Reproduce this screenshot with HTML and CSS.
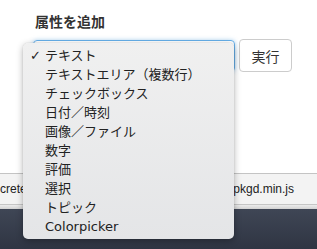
FILE: index.html
```html
<!DOCTYPE html>
<html lang="ja">
<head>
  <meta charset="UTF-8" />
  <title>属性を追加</title>
  <link rel="stylesheet" href="styles.css">
</head>
<body>

<div class="page">
  <div class="form">
    <label class="title">属性を追加</label>
    <div class="row">
      <div class="select"></div>
      <button class="btn">実行</button>
    </div>
  </div>

  <div class="files">
    <span>crete</span>
    <span>masonry.pkgd.min.js</span>
  </div>
  <div class="band"></div>
  <div class="desk"></div>

  <ul class="menu">
    <li class="checked">テキスト</li>
    <li>テキストエリア（複数行）</li>
    <li>チェックボックス</li>
    <li>日付／時刻</li>
    <li>画像／ファイル</li>
    <li>数字</li>
    <li>評価</li>
    <li>選択</li>
    <li>トピック</li>
    <li>Colorpicker</li>
  </ul>
</div>

</body>
</html>
```

FILE: styles.css
```css
body {
  margin: 0;
  font-family: "DejaVu Sans", "Noto Sans CJK JP", sans-serif;
  background: #fff;
  overflow: hidden;
}

.page {
  position: relative;
  height: 249px;
}

.form {
  height: 173px;
  padding: 12px 0 0 33px;
  box-sizing: border-box;
}

.title {
  display: block;
  font-size: 14px;
  font-weight: bold;
  line-height: 20px;
  color: #333;
  margin-bottom: 7px;
  padding-left: 2px;
}

.row {
  display: flex;
  gap: 4px;
}

.select {
  width: 202px;
  height: 32px;
  margin-top: 1px;
  box-sizing: border-box;
  border: 1px solid #66afe9;
  border-radius: 4px;
  box-shadow: 0 0 4px rgba(102, 175, 233, 0.5);
}

.btn {
  width: 53px;
  height: 33px;
  background: #fff;
  border: 1px solid #ccc;
  border-radius: 4px;
  font-family: "Noto Sans CJK JP", sans-serif;
  font-size: 14px;
  color: #333;
  padding: 0;
}

.files {
  display: flex;
  justify-content: space-between;
  align-items: center;
  height: 30px;
  padding-right: 23px;
  background: #f3f3f3;
  border-top: 1px solid #c4c4c4;
  border-bottom: 1px solid #c6c6c6;
  font-family: "Liberation Sans", sans-serif;
  font-size: 12px;
  color: #222;
}

.band {
  height: 4px;
  background: linear-gradient(#ececec, #d2d2d2);
}

.desk {
  height: 40px;
  background: linear-gradient(#3f4655, #2f3543);
}

.menu {
  position: absolute;
  left: 23px;
  top: 43px;
  width: 211px;
  margin: 0;
  padding: 3px 0;
  list-style: none;
  background: linear-gradient(#f0f0f0, #e4e5e7);
  border-radius: 5px;
  box-shadow: 0 2px 7px rgba(0, 0, 0, 0.3), 0 0 1px rgba(0, 0, 0, 0.25);
  font-size: 13px;
  color: #222;
}

.menu li {
  line-height: 19px;
  padding-left: 22px;
  position: relative;
}

.menu li.checked::before {
  content: "✓";
  position: absolute;
  left: 7px;
  font-weight: bold;
}
```
